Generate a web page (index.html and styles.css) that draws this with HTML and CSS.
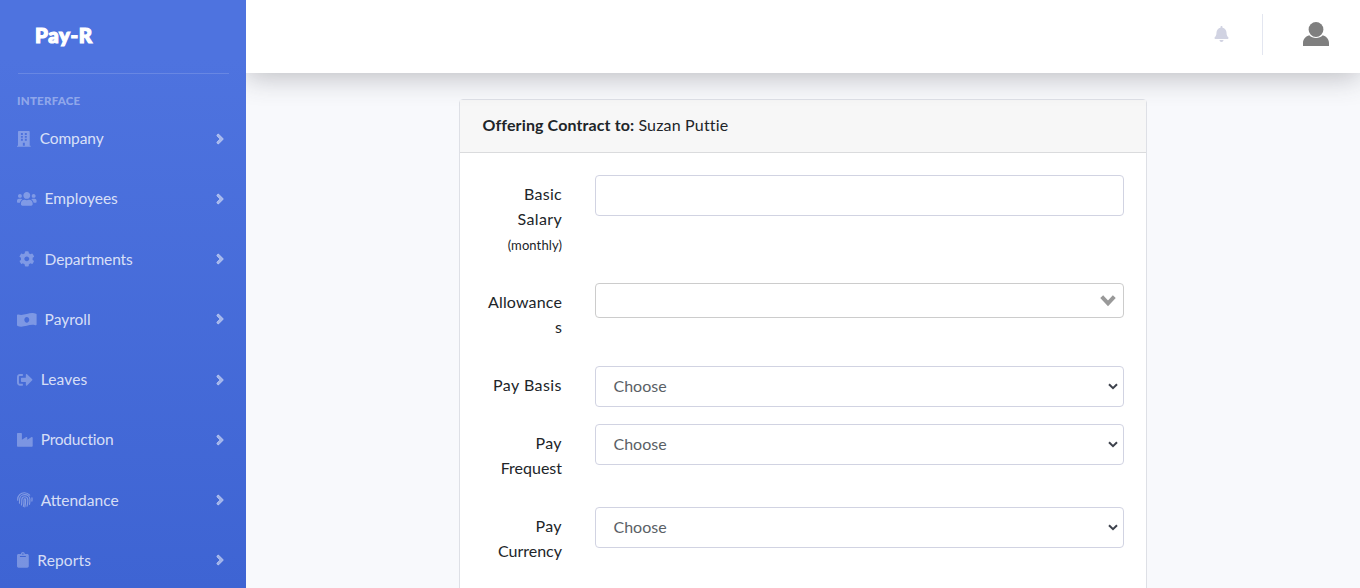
FILE: index.html
```html
<!DOCTYPE html>
<html lang="en">
<head>
<meta charset="utf-8">
<title>Pay-R</title>
<link rel="stylesheet" href="styles.css">
</head>
<body>
<svg class="defs" width="0" height="0">
  <symbol id="angle" viewBox="0 0 256 512"><path d="M224.3 273l-136 136c-9.4 9.4-24.6 9.4-33.9 0l-22.6-22.6c-9.4-9.4-9.4-24.6 0-33.9l96.4-96.4-96.4-96.4c-9.4-9.4-9.4-24.6 0-33.9L54.3 103c9.4-9.4 24.6-9.4 33.9 0l136 136c9.5 9.4 9.5 24.6.1 34z"/></symbol>
  <symbol id="chevron" viewBox="0 0 10 7"><path d="M1 1.2l4 4 4-4" fill="none" stroke="#3d424c" stroke-width="2"/></symbol>
</svg>
<div class="page">
  <nav class="sidebar">
    <div class="brand">Pay-R</div>
    <hr class="divider">
    <div class="heading">Interface</div>
    <ul class="menu">
      <li class="item"><svg class="icon narrow" viewBox="0 0 448 512"><path fill-rule="evenodd" d="M436 480h-20V24c0-13-11-24-24-24H56C43 0 32 11 32 24v456H12c-7 0-12 5-12 12v20h448v-20c0-7-5-12-12-12zM128 64h64v64h-64zM256 64h64v64h-64zM128 160h64v64h-64zM256 160h64v64h-64zM128 256h64v64h-64zM256 256h64v64h-64zM192 384h64v96h-64z"/></svg><span class="label company">Company</span><svg class="angle"><use href="#angle"/></svg></li>
      <li class="item"><svg class="icon wide" viewBox="0 0 640 512"><path d="M96 224c35.3 0 64-28.7 64-64s-28.7-64-64-64-64 28.7-64 64 28.7 64 64 64zm448 0c35.3 0 64-28.7 64-64s-28.7-64-64-64-64 28.7-64 64 28.7 64 64 64zm32 32h-64c-17.6 0-33.5 7.1-45.1 18.6 40.3 22.1 68.9 62 75.1 109.4h66c17.7 0 32-14.3 32-32v-32c0-35.3-28.7-64-64-64zm-256 0c61.9 0 112-50.1 112-112S381.9 32 320 32 208 82.1 208 144s50.1 112 112 112zm76.8 32h-8.3c-20.8 10-43.9 16-68.5 16s-47.6-6-68.5-16h-8.3C179.6 288 128 339.6 128 403.2V432c0 26.5 21.5 48 48 48h288c26.5 0 48-21.5 48-48v-28.8c0-63.6-51.6-115.2-115.2-115.2zm-223.7-13.4C161.5 263.1 145.6 256 128 256H64c-35.3 0-64 28.7-64 64v32c0 17.7 14.3 32 32 32h65.9c6.3-47.4 34.9-87.3 75.2-109.4z"/></svg><span class="label employees">Employees</span><svg class="angle"><use href="#angle"/></svg></li>
      <li class="item"><svg class="icon wide" viewBox="0 0 512 512"><path d="M487.4 315.7l-42.6-24.6c4.3-23.2 4.3-47 0-70.2l42.6-24.6c4.9-2.8 7.1-8.6 5.5-14-11.1-35.6-30-67.8-54.7-94.6-3.8-4.1-10-5.1-14.8-2.3L380.8 110c-17.9-15.4-38.5-27.3-60.8-35.1V25.8c0-5.6-3.9-10.5-9.4-11.7-36.7-8.2-74.3-7.8-109.2 0-5.5 1.2-9.4 6.1-9.4 11.7V75c-22.2 7.9-42.8 19.8-60.8 35.1L88.7 85.5c-4.9-2.8-11-1.9-14.8 2.3-24.7 26.7-43.6 58.9-54.7 94.6-1.7 5.4.6 11.2 5.5 14L67.3 221c-4.3 23.2-4.3 47 0 70.2l-42.6 24.6c-4.9 2.8-7.1 8.6-5.5 14 11.1 35.6 30 67.8 54.7 94.6 3.8 4.1 10 5.1 14.8 2.3l42.6-24.6c17.9 15.4 38.5 27.3 60.8 35.1v49.2c0 5.6 3.9 10.5 9.4 11.7 36.7 8.2 74.3 7.8 109.2 0 5.5-1.2 9.4-6.1 9.4-11.7v-49.2c22.2-7.9 42.8-19.8 60.8-35.1l42.6 24.6c4.9 2.8 11 1.9 14.8-2.3 24.7-26.7 43.6-58.9 54.7-94.6 1.5-5.5-.7-11.3-5.6-14.1zM256 336c-44.1 0-80-35.9-80-80s35.9-80 80-80 80 35.9 80 80-35.9 80-80 80z"/></svg><span class="label departments">Departments</span><svg class="angle"><use href="#angle"/></svg></li>
      <li class="item"><svg class="icon wide" viewBox="0 0 640 512"><path d="M621.16 54.46C582.37 38.19 543.55 32 504.75 32c-123.17-.01-246.33 62.34-369.5 62.34-30.89 0-61.76-3.92-92.65-13.72-3.47-1.1-6.95-1.62-10.35-1.62C15.04 79 0 92.32 0 110.81v317.26c0 12.63 7.23 24.6 18.84 29.46C57.63 473.81 96.45 480 135.25 480c123.17 0 246.34-62.35 369.51-62.35 30.89 0 61.76 3.92 92.65 13.72 3.47 1.1 6.95 1.62 10.35 1.62 17.21 0 32.25-13.32 32.25-31.81V83.93c-.01-12.64-7.24-24.6-18.85-29.47zM320 352c-44.19 0-80-42.99-80-96 0-53.02 35.82-96 80-96s80 42.98 80 96c0 53.03-35.83 96-80 96z"/></svg><span class="label payroll">Payroll</span><svg class="angle"><use href="#angle"/></svg></li>
      <li class="item"><svg class="icon" viewBox="0 0 512 512"><path d="M497 273L329 441c-15 15-41 4.5-41-17v-96H152c-13.3 0-24-10.7-24-24v-96c0-13.3 10.7-24 24-24h136V88c0-21.4 25.9-32 41-17l168 168c9.3 9.4 9.3 24.6 0 34zM192 436v-40c0-6.6-5.4-12-12-12H96c-17.7 0-32-14.3-32-32V160c0-17.7 14.3-32 32-32h84c6.6 0 12-5.4 12-12V76c0-6.6-5.4-12-12-12H96c-53 0-96 43-96 96v192c0 53 43 96 96 96h84c6.6 0 12-5.4 12-12z"/></svg><span class="label leaves">Leaves</span><svg class="angle"><use href="#angle"/></svg></li>
      <li class="item"><svg class="icon" viewBox="0 0 512 512"><path d="M475.115 163.781L336 252.309v-68.28c0-18.916-20.931-30.399-36.885-20.248L160 252.309V56c0-13.255-10.745-24-24-24H24C10.745 32 0 42.745 0 56v400c0 13.255 10.745 24 24 24h464c13.255 0 24-10.745 24-24V184.029c0-18.917-20.931-30.399-36.885-20.248z"/></svg><span class="label production">Production</span><svg class="angle"><use href="#angle"/></svg></li>
      <li class="item"><svg class="icon line" viewBox="0 0 512 512"><path d="M24 270v-36C24 118 118 24 240 24c70 0 130 28 175 76M488 190c4 40 2 80-3 105M80 365c6-40 5-80 5-120C85 155 155 88 250 88c90 0 165 66 172 150 2 50-3 110-15 165M145 425c10-55 13-110 12-175 0-55 40-94 95-94 56 0 100 42 102 96 2 70-8 140-26 208M208 470c18-65 22-140 22-220 0-36 50-36 51 0 1 90-8 165-25 238"/></svg><span class="label attendance">Attendance</span><svg class="angle"><use href="#angle"/></svg></li>
      <li class="item"><svg class="icon slim" viewBox="0 0 384 512"><path d="M384 112v352c0 26.51-21.49 48-48 48H48c-26.51 0-48-21.49-48-48V112c0-26.51 21.49-48 48-48h80c0-35.29 28.71-64 64-64s64 28.71 64 64h80c26.51 0 48 21.49 48 48zM192 40c-13.255 0-24 10.745-24 24s10.745 24 24 24 24-10.745 24-24-10.745-24-24-24m96 114v-20a6 6 0 0 0-6-6H102a6 6 0 0 0-6 6v20a6 6 0 0 0 6 6h180a6 6 0 0 0 6-6z"/></svg><span class="label reports">Reports</span><svg class="angle"><use href="#angle"/></svg></li>
    </ul>
  </nav>
  <div class="content">
    <header class="topbar">
      <svg class="bell" viewBox="0 0 448 512"><path d="M224 512c35.32 0 63.97-28.65 63.97-64H160.03c0 35.35 28.65 64 63.97 64zm215.39-149.71c-19.32-20.76-55.47-51.99-55.47-154.29 0-77.7-54.48-139.9-127.94-155.16V32c0-17.67-14.32-32-31.98-32s-31.98 14.33-31.98 32v20.84C118.56 68.1 64.08 130.3 64.08 208c0 102.3-36.15 133.53-55.47 154.29-6 6.45-8.66 14.16-8.61 21.71.11 16.4 12.98 32 32.1 32h383.8c19.12 0 32-15.6 32.1-32 .05-7.55-2.61-15.27-8.61-21.71z"/></svg>
      <div class="separator"></div>
      <svg class="avatar" viewBox="0 0 26 24"><path d="M0 24v-3C0 17 3 14.400 6.200 13.300 8 15.200 10.300 16 13 16s5-.8 6.800-2.700C23 14.400 26 17 26 21v3z"/><circle cx="13" cy="7.500" r="7.400"/></svg>
    </header>
    <main class="card">
      <div class="card-head"><b class="title">Offering Contract to:</b> <span class="person">Suzan Puttie</span></div>
      <form class="form">
        <div class="row"><label class="name"><span class="basic">Basic</span><br><span class="salary">Salary</span><br><small>(monthly)</small></label><input class="control" type="text"></div>
        <div class="row"><label class="name"><span class="allow">Allowance</span><br>s</label><div class="control multi"><svg class="arrow" viewBox="0 0 16 12"><path d="M1.700 1.700L8 8.300l6.300-6.600" fill="none" stroke="#999" stroke-width="4"/></svg></div></div>
        <div class="row single"><label class="name"><span class="basis">Pay Basis</span></label><div class="control select"><span class="value">Choose</span><svg class="chevron"><use href="#chevron"/></svg></div></div>
        <div class="row"><label class="name"><span class="pay">Pay</span><br><span class="frequest">Frequest</span></label><div class="control select"><span class="value">Choose</span><svg class="chevron"><use href="#chevron"/></svg></div></div>
        <div class="row"><label class="name"><span class="pay">Pay</span><br><span class="currency">Currency</span></label><div class="control select"><span class="value">Choose</span><svg class="chevron"><use href="#chevron"/></svg></div></div>
      </form>
    </main>
  </div>
</div>
</body>
</html>
```
FILE: styles.css
```css
* { box-sizing: border-box; }
body { margin: 0; height: 588px; overflow: hidden; font: 16px/25px Lato, "Open Sans", sans-serif; color: #212529; background: #f8f9fc; }
.defs { display: none; }
.page { display: flex; height: 588px; }
.sidebar { flex: 0 0 246px; padding: 0 17px; background: linear-gradient(180deg, #4e73df 10%, #3e64d3 100%); overflow: hidden; }
.brand { height: 73px; padding: 22px 0 0 18px; color: #fff; font: 900 20.500px/26px Lato, sans-serif; -webkit-text-stroke: 1.200px #fff; letter-spacing: .6px; }
.divider { margin: 0 0 0 1px; border: 0; border-top: 1px solid rgba(255,255,255,.15); }
.heading { margin-top: 17px; height: 20px; font-size: 11.500px; line-height: 20px; font-weight: 900; letter-spacing: .25px; text-transform: uppercase; color: rgba(255,255,255,.4); }
.menu { list-style: none; margin: -2.400px 0 0; padding: 0; }
.item { display: flex; align-items: center; height: 60.220px; }
.icon { width: 15.700px; height: 15.700px; fill: rgba(255,255,255,.3); margin-right: 8px; flex: none; }
.narrow { width: 13.700px; margin-right: 9px; }
.wide { width: 19.600px; }
.slim { width: 11.800px; margin-right: 8.500px; }
.line { fill: none; stroke: rgba(255,255,255,.35); stroke-width: 38; stroke-linecap: round; }
.label { font-size: 15.500px; color: rgba(255,255,255,.8); white-space: nowrap; }
.company, .departments { letter-spacing: -.1px; }
.production { letter-spacing: -.2px; }
.leaves, .reports { letter-spacing: .15px; }
.angle { width: 8px; height: 16px; margin-left: auto; margin-right: 5px; fill: rgba(255,255,255,.5); stroke: rgba(255,255,255,.5); stroke-width: 22; overflow: visible; }
.content { flex: 1; min-width: 0; overflow: hidden; }
.topbar { position: relative; height: 73px; display: flex; align-items: center; justify-content: flex-end; background: #fff; padding: 0 31px 4px 0; box-shadow: 0 4px 28px rgba(58,59,69,.32); }
.bell { width: 15px; height: 16px; fill: #d1d3e2; margin: 0 33px 2px 0; }
.separator { width: 1px; height: 41px; background: #e3e6f0; margin-right: 40px; }
.avatar { width: 26px; height: 24px; fill: #7f7f7f; margin-bottom: 1px; }
.card { width: 688px; height: 600px; margin: 26px 0 0 213px; background: #fff; border: 1px solid #dee0e6; border-radius: 4px; }
.card-head { height: 53px; padding: 12px 22.500px; background: #f7f7f7; border-bottom: 1px solid #dadbdd; white-space: nowrap; }
.title { letter-spacing: .12px; }
.person { letter-spacing: .18px; }
.form { padding: 22px; }
.row { display: flex; align-items: flex-start; justify-content: space-between; margin-bottom: 18px; }
.name { width: 80px; padding: 6px 0 9px; text-align: right; }
.name small { display: inline-block; height: 25px; line-height: 28px; vertical-align: top; font-size: 13px; letter-spacing: .1px; }
.basic { letter-spacing: .3px; }
.salary { letter-spacing: .35px; }
.allow { letter-spacing: .15px; }
.basis { letter-spacing: .45px; }
.pay { letter-spacing: .4px; }
.single { height: 40px; }
.control { width: 529px; height: 41px; border: 1px solid #d1d3e2; border-radius: 4px; background: #fff; outline: none; }
.multi { height: 35px; display: flex; justify-content: flex-end; padding: 11px 7px; border-color: #ccc; }
.arrow { width: 16px; height: 12px; }
.select { display: flex; align-items: center; justify-content: space-between; padding: 0 5px 0 17.500px; color: #5a5f66; }
.value { margin-bottom: 2px; }
.chevron { width: 10px; height: 7px; }
```
